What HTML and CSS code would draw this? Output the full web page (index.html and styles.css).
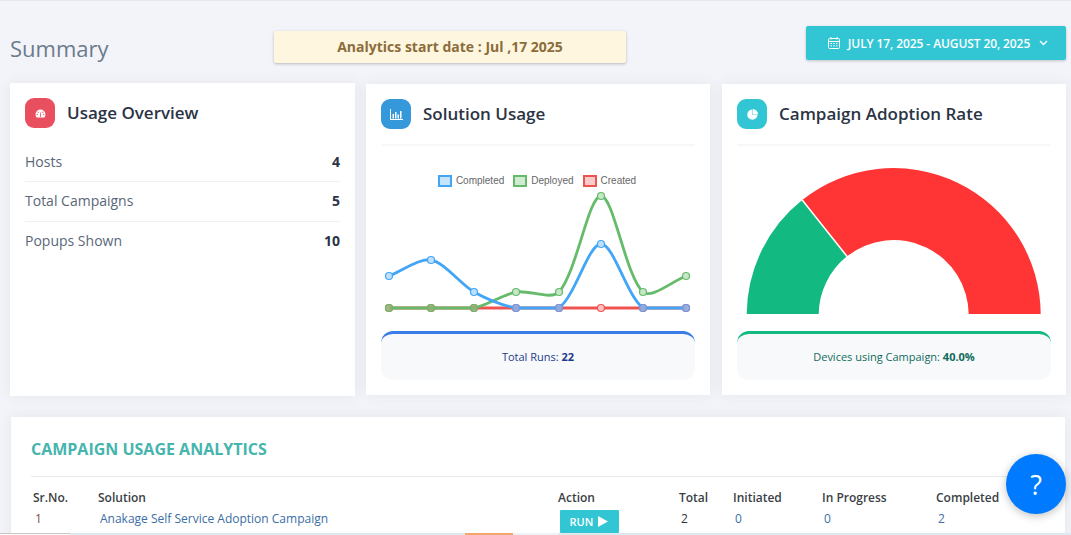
FILE: index.html
```html
<!DOCTYPE html>
<html>
<head>
<meta charset="utf-8">
<title>Summary</title>
<link rel="stylesheet" href="styles.css">
</head>
<body>
<div class="page">
    <div class="topbar">
        <h1 class="page-title">Summary</h1>
        <div class="notice">Analytics start date : Jul ,17 2025</div>
        <button class="date-range">
            <svg class="date-icon" width="14" height="14" viewBox="0 0 14 14" fill="none" stroke="#fff" stroke-width="1">
                <rect x="1.5" y="2.5" width="11" height="10" rx="1"/>
                <path d="M1.5 5.5h11M4 1v2.5M10 1v2.5"/>
                <path d="M3.5 7.5h1.5M6.3 7.5h1.5M9 7.5h1.5M3.5 9.8h1.5M6.3 9.8h1.5M9 9.8h1.5"/>
            </svg>
            <span>JULY 17, 2025 - AUGUST 20, 2025</span>
            <svg class="date-caret" width="9" height="6" viewBox="0 0 9 6" fill="none" stroke="#fff" stroke-width="1.4"><path d="M1 1l3.5 3.5L8 1"/></svg>
        </button>
    </div>

    <div class="cards">
        <section class="card card-usage">
            <div class="card-head">
                <span class="head-icon icon-red">
                    <svg width="11" height="9" viewBox="0 0 12 10">
                        <path fill="#fff" d="M6 .5a5.500 5.500 0 0 0-5.500 5.500c0 1.200.3 2.200 1 3.200.1.2.3.3.5.3h8c.2 0 .4-.1.5-.3.7-1 1-2 1-3.200A5.500 5.500 0 0 0 6 .5z"/>
                        <path fill="#e9505f" d="M5.500 8.500l.3-5h.6l.3 5z"/>
                        <circle fill="#e9505f" cx="2.400" cy="6" r=".7"/><circle fill="#e9505f" cx="3.500" cy="3.500" r=".7"/><circle fill="#e9505f" cx="8.500" cy="3.500" r=".7"/><circle fill="#e9505f" cx="9.600" cy="6" r=".7"/>
                    </svg>
                </span>
                <h2>Usage Overview</h2>
            </div>
            <div class="stat-list">
                <div class="stat"><span>Hosts</span><b>4</b></div>
                <div class="stat"><span>Total Campaigns</span><b>5</b></div>
                <div class="stat"><span>Popups Shown</span><b>10</b></div>
            </div>
        </section>

        <section class="card">
            <div class="card-head ruled">
                <span class="head-icon icon-blue">
                    <svg width="13" height="11" viewBox="0 0 13 11" fill="#fff">
                        <path d="M0 0h1v10h12v1H0z"/><path d="M2.500 5h1.500v4.500H2.500zM5 3h1.500v6.500H5zM7.500 5.500H9v4H7.500zM10 2h1.500v7.500H10z"/>
                    </svg>
                </span>
                <h2>Solution Usage</h2>
            </div>
            <div class="legend">
                <span class="legend-item"><i class="swatch swatch-blue"></i>Completed</span>
                <span class="legend-item"><i class="swatch swatch-green"></i>Deployed</span>
                <span class="legend-item"><i class="swatch swatch-red"></i>Created</span>
            </div>
            <svg class="line-chart" width="314" height="134" viewBox="381 190 314 134" fill="none">
                <g stroke="#ef5350" stroke-width="2.800">
                    <path d="M389 308H686"/>
                    <g fill="rgba(239,83,80,.3)" stroke-width="1.200">
                        <circle cx="389" cy="308" r="3.500"/><circle cx="431" cy="308" r="3.500"/><circle cx="474" cy="308" r="3.500"/><circle cx="516" cy="308" r="3.500"/><circle cx="559" cy="308" r="3.500"/><circle cx="643" cy="308" r="3.500"/><circle cx="686" cy="308" r="3.500"/>
                    </g>
                    <circle cx="601" cy="308" r="3.500" fill="#fbc4c3" stroke-width="1.200"/>
                </g>
                <g stroke="#66bb6a" stroke-width="2.800">
                    <path d="M389 308C401.600 308 418.250 308 431 308C443.750 308 461.600 308 474 308C487 305.500 503 294.500 516 292C528.500 289.700 551.600 300.300 559 292C577 271.500 588.400 196 601 196C613.600 196 625.300 275.400 643 292C650.800 299.400 673.100 280.800 686 276"/>
                    <g fill="rgba(150,175,120,.8)" stroke-width="1.200">
                        <circle cx="389" cy="308" r="3.500"/><circle cx="431" cy="308" r="3.500"/><circle cx="474" cy="308" r="3.500"/>
                    </g>
                    <g fill="#c5e6c7" stroke-width="1.200">
                        <circle cx="516" cy="292" r="3.500"/><circle cx="559" cy="292" r="3.500"/><circle cx="601" cy="196" r="3.500"/><circle cx="643" cy="292" r="3.500"/><circle cx="686" cy="276" r="3.500"/>
                    </g>
                </g>
                <g stroke="#42a5f5" stroke-width="2.800">
                    <path d="M389 276C401.600 271.200 419.400 257.800 431 260C444.900 262.600 460.100 284.100 474 292C485.600 298.500 503 305.500 516 308C528.500 308 549.900 308 559 308C575.400 295.700 588.400 244 601 244C613.600 244 626.700 295.700 643 308C652.200 308 673.100 308 686 308"/>
                    <g fill="#bfe0fb" stroke-width="1.200">
                        <circle cx="389" cy="276" r="3.500"/><circle cx="431" cy="260" r="3.500"/><circle cx="474" cy="292" r="3.500"/><circle cx="601" cy="244" r="3.500"/>
                    </g>
                    <g fill="rgba(150,170,220,.85)" stroke="#6a9be6" stroke-width="1.200">
                        <circle cx="516" cy="308" r="3.500"/><circle cx="559" cy="308" r="3.500"/><circle cx="643" cy="308" r="3.500"/><circle cx="686" cy="308" r="3.500"/>
                    </g>
                </g>
            </svg>
            <div class="card-foot foot-blue">Total Runs: <b>22</b></div>
        </section>

        <section class="card card-adoption">
            <div class="card-head ruled">
                <span class="head-icon icon-teal">
                    <svg width="11" height="11" viewBox="0 0 12 12" fill="#fff">
                        <path d="M5.600.5A5.600 5.600 0 1 0 11.500 6.400H5.600z"/><path d="M6.100 0v5.900H12A5.900 5.900 0 0 0 6.100 0z"/>
                    </svg>
                </span>
                <h2>Campaign Adoption Rate</h2>
            </div>
            <svg class="gauge" width="314" height="169" viewBox="737 145 314 169">
                <path fill="#12b981" d="M746.700 315A147 147 0 0 1 802.200 200L847 256.300A75 75 0 0 0 818.700 315Z"/>
                <path fill="#ff3535" d="M802.200 200A147 147 0 0 1 1040.700 315L968.700 315A75 75 0 0 0 847 256.300Z"/>
                <path stroke="#fff" stroke-width="1.500" d="M801.800 199.500L847.300 256.700"/>
            </svg>
            <div class="card-foot foot-green">Devices using Campaign: <b>40.0%</b></div>
        </section>
    </div>

    <section class="card analytics">
        <h3 class="analytics-title">CAMPAIGN USAGE ANALYTICS</h3>
        <table class="analytics-table">
            <thead>
                <tr>
                    <th class="col-sr">Sr.No.</th>
                    <th class="col-solution">Solution</th>
                    <th class="col-action">Action</th>
                    <th class="col-total">Total</th>
                    <th class="col-initiated">Initiated</th>
                    <th class="col-progress">In Progress</th>
                    <th class="col-completed">Completed</th>
                </tr>
            </thead>
            <tbody>
                <tr>
                    <td class="num-plain">1</td>
                    <td><a href="#">Anakage Self Service Adoption Campaign</a></td>
                    <td><button class="run">RUN <svg width="10" height="11" viewBox="0 0 10 11" fill="#fff"><path d="M0 0l10 5.500L0 11z"/></svg></button></td>
                    <td class="num-dark">2</td>
                    <td><a href="#">0</a></td>
                    <td><a href="#">0</a></td>
                    <td><a href="#">2</a></td>
                </tr>
            </tbody>
        </table>
    </section>
</div>

<button class="help">?</button>
<div class="strip"><span class="strip-gray"></span><span class="strip-blue"></span><span class="strip-orange"></span><span class="strip-pale"></span><span class="strip-blue strip-fill"></span></div>
</body>
</html>
```

FILE: styles.css
```css
* {
    box-sizing: border-box;
}

html, body {
    margin: 0;
    height: 535px;
    overflow: hidden;
}

body {
    position: relative;
    background-color: #f3f4f9;
    border-top: 1px solid #e6e8f0;
    font-family: "Open Sans", "Noto Sans", sans-serif;
    color: #2b3445;
}

.page {
    padding: 0 5px 0 10px;
}

.topbar {
    display: flex;
    align-items: flex-start;
    height: 82px;
}

.page-title {
    margin: 31px 0 0 0;
    width: 264px;
    font-size: 22px;
    line-height: 32px;
    font-weight: 400;
    color: #6c7b8c;
}

.notice {
    margin-top: 30px;
    width: 352px;
    height: 32px;
    background-color: #fff6e0;
    border-radius: 2px;
    box-shadow: 0 1px 3px rgba(0, 0, 0, .25);
    text-align: center;
    font-size: 14px;
    line-height: 32px;
    font-weight: 700;
    color: #8a6d3b;
}

.date-range {
    margin: 25px 0 0 auto;
    display: flex;
    align-items: center;
    justify-content: center;
    width: 260px;
    height: 34px;
    padding: 0 0 0 3px;
    border: 0;
    border-radius: 2px;
    background-color: #32c6d4;
    box-shadow: 0 1px 3px rgba(0, 0, 0, .2);
    color: #fff;
    font-family: inherit;
    font-size: 12px;
    font-weight: 600;
    letter-spacing: -.1px;
}

.date-icon {
    margin-right: 7px;
}

.date-caret {
    margin-left: 9px;
}

.cards {
    display: grid;
    grid-template-columns: 345px 344px 345px;
    gap: 11px;
}

.card {
    background-color: #fff;
    box-shadow: 0 0 14px rgba(40, 50, 70, .07);
    padding: 15px;
    margin: 1px 0;
    height: 311px;
}

.card-usage {
    margin: 0;
    height: 313px;
}

.card-adoption {
    margin-left: 1px;
}

.card-head {
    display: flex;
    align-items: center;
    height: 30px;
}

.card-head.ruled {
    box-sizing: content-box;
    padding-bottom: 15px;
    border-bottom: 2px solid #f6f7f8;
}

.card-head h2 {
    margin: -2px 0 0 12px;
    font-size: 17px;
    font-weight: 600;
    color: #2b3445;
}

.head-icon {
    display: flex;
    align-items: center;
    justify-content: center;
    width: 30px;
    height: 30px;
    border-radius: 9px;
}

.icon-red {
    background-color: #e9505f;
}

.icon-blue {
    background-color: #3498db;
}

.icon-teal {
    background-color: #32c6d4;
}

.stat-list {
    margin-top: 14.500px;
}

.stat {
    display: flex;
    justify-content: space-between;
    align-items: center;
    height: 39.500px;
    padding-bottom: 1.500px;
    font-size: 14px;
    color: #5a6778;
    border-bottom: 1px solid #f0f1f4;
}

.stat:last-child {
    border-bottom: 0;
}

.stat b {
    font-weight: 700;
    color: #2b3445;
}

.legend {
    display: flex;
    justify-content: center;
    gap: 9px;
    margin: 27px 2px 2px 0;
    height: 15px;
    font-family: "Liberation Sans", Arial, sans-serif;
    font-size: 10px;
    color: #666;
}

.legend-item {
    display: flex;
    align-items: center;
}

.swatch {
    width: 14px;
    height: 12px;
    margin-right: 4px;
    border: 2px solid;
}

.swatch-blue {
    border-color: #42a5f5;
    background-color: #c6e4fc;
}

.swatch-green {
    border-color: #66bb6a;
    background-color: #d1ebd2;
}

.swatch-red {
    border-color: #ef5350;
    background-color: #fbcbcb;
}

.line-chart {
    display: block;
    height: 134px;
    margin-bottom: 7px;
}

.gauge {
    display: block;
    height: 169px;
    margin: -1px 0 17px 0;
}

.card-foot {
    height: 49px;
    border-top: 3px solid;
    border-radius: 12px;
    background-color: #f8f9fb;
    text-align: center;
    font-size: 11px;
    line-height: 46px;
}

.foot-blue {
    border-top-color: #3b7de8;
    color: #1e3a8a;
}

.foot-green {
    border-top-color: #12b981;
    color: #0f6b5c;
}

.analytics {
    margin: 21px 0 0 1px;
    width: 1054px;
    height: 130px;
    padding: 20px;
}

.analytics-title {
    margin: 0;
    height: 39px;
    font-size: 16px;
    line-height: 24px;
    font-weight: 700;
    color: #45b5ae;
    border-bottom: 1px solid #e8eaef;
    box-sizing: content-box;
}

.analytics-table {
    border-collapse: collapse;
    table-layout: fixed;
    width: 1000px;
    font-size: 12px;
    line-height: 16px;
}

.analytics-table th {
    padding: 13px 0 1px 1px;
    text-align: left;
    font-weight: 600;
    color: #3a3f45;
}

.analytics-table .col-sr {
    padding-left: 2px;
}

.analytics-table td {
    padding: 4px 0 0 3px;
    vertical-align: top;
    color: #3a6ea5;
}

.analytics-table a {
    color: #3a6ea5;
    text-decoration: none;
}

.col-sr {
    width: 66px;
}

.col-solution {
    width: 460px;
}

.col-action {
    width: 121px;
}

.col-total {
    width: 54px;
}

.col-initiated {
    width: 89px;
}

.col-progress {
    width: 114px;
}

.col-completed {
    width: 96px;
}

.analytics-table .num-plain {
    padding-left: 4px;
    color: #7a4f48;
}

.analytics-table .num-dark {
    color: #2f3338;
}

.run {
    display: flex;
    align-items: center;
    gap: 5px;
    justify-content: center;
    width: 59px;
    height: 23px;
    margin-top: -1px;
    padding: 0 1px 0 0;
    border: 0;
    border-radius: 1px;
    background-color: #32c6d4;
    color: #fff;
    font-family: inherit;
    font-size: 11px;
    font-weight: 600;
}

.help {
    position: absolute;
    left: 1006px;
    top: 453px;
    width: 60px;
    height: 60px;
    padding: 0;
    border: 0;
    border-radius: 50%;
    background-color: #007bff;
    box-shadow: 0 2px 8px rgba(0, 0, 0, .25);
    color: #fff;
    font-family: inherit;
    font-size: 27px;
}

.strip {
    position: absolute;
    left: 0;
    right: 0;
    bottom: 0;
    height: 2px;
    display: flex;
}

.strip span {
    display: block;
}

.strip-gray {
    width: 70px;
    background-color: #fafafa;
    border-top: 1px solid #c8c8c8;
}

.strip-blue {
    width: 395px;
    background-color: #dce9ee;
}

.strip-orange {
    width: 48px;
    background-color: #f4a66a;
}

.strip-pale {
    width: 45px;
    background-color: #eef3f7;
}

.strip .strip-fill {
    width: auto;
    flex: 1;
}
```
